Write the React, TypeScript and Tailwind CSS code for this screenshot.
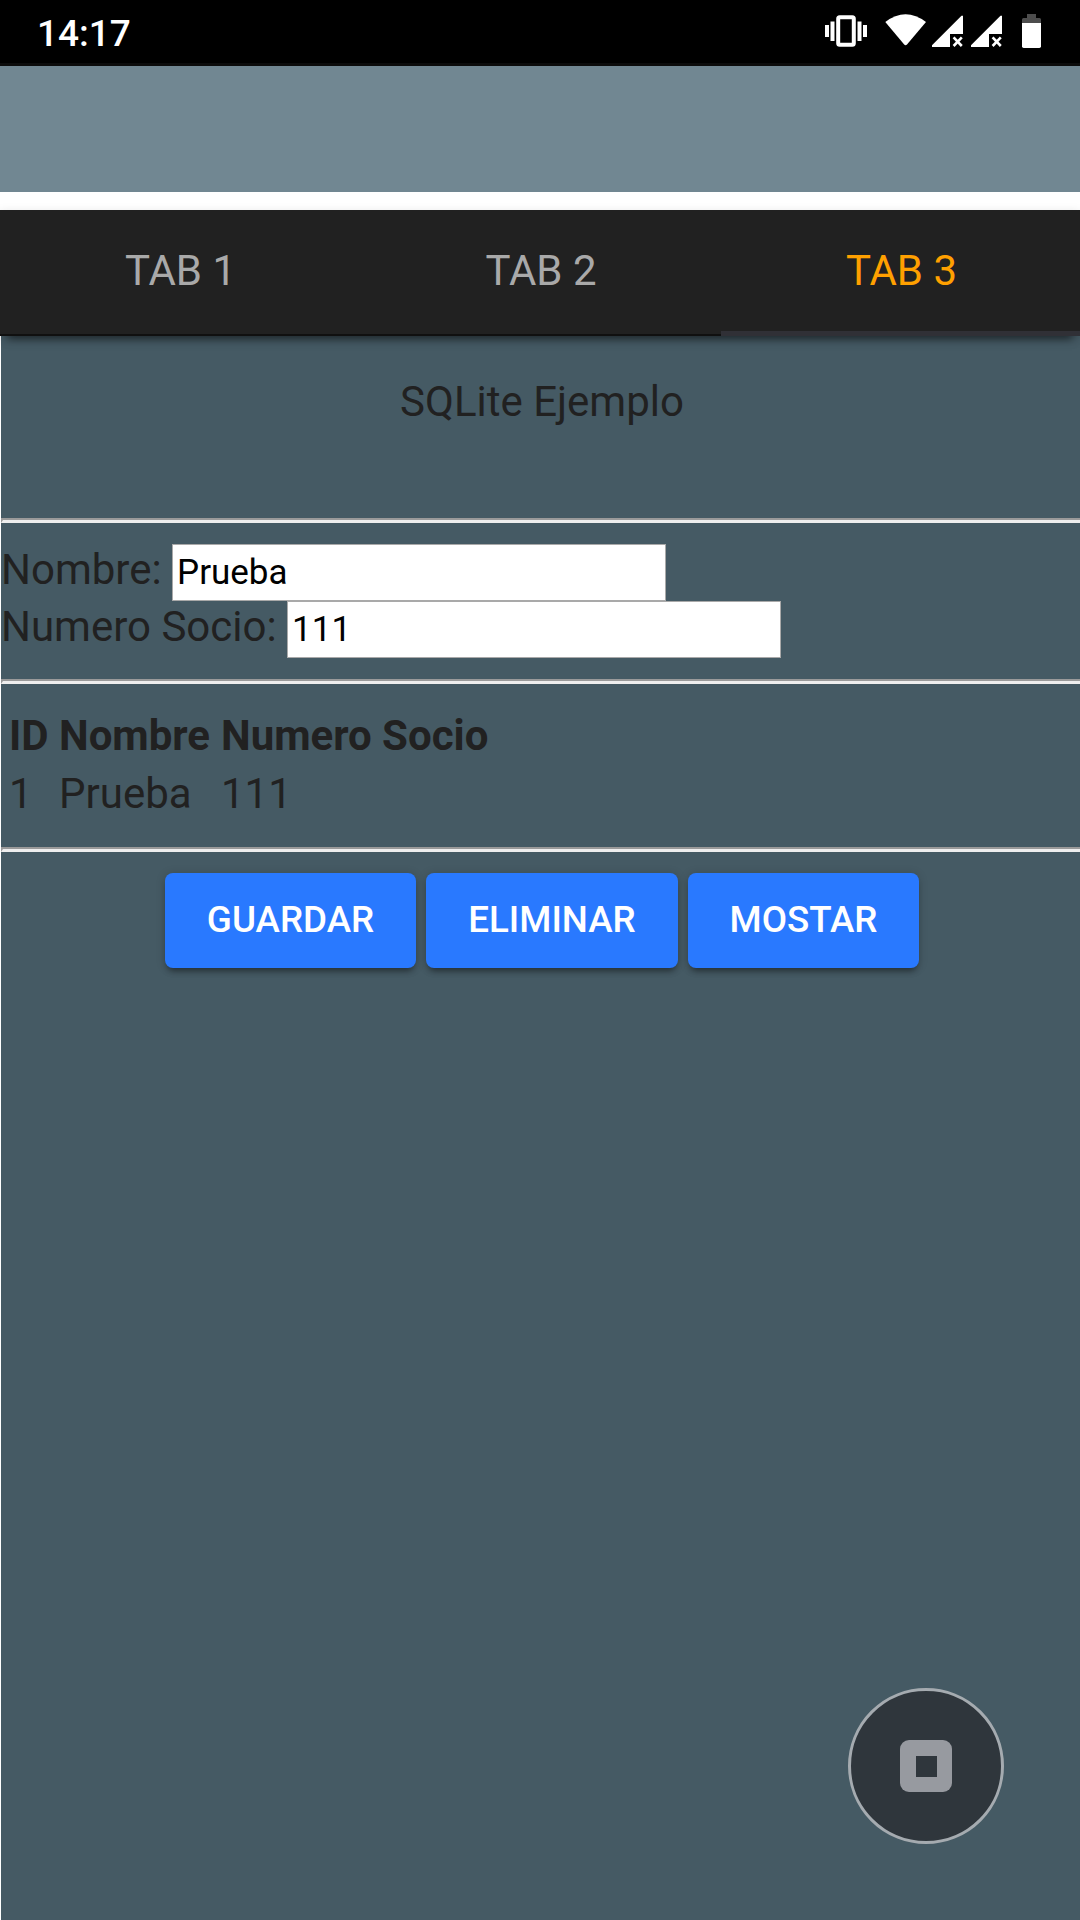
import React from 'react';

function StatusIcons() {
  return (
    <svg className="block" width="280" height="63" viewBox="0 0 280 63" fill="#fff">
      <rect x="25" y="25" width="4" height="12" />
      <rect x="30.5" y="21.5" width="4" height="19.5" />
      <rect x="38.2" y="17.2" width="15.6" height="27.6" rx="1.5" fill="none" stroke="#fff" strokeWidth="4" />
      <rect x="57.5" y="21.5" width="4" height="19.5" />
      <rect x="63" y="25" width="4" height="12" />
      <path d="M85.3 22 Q105.5 6.5 126 22 L107 44.6 Q105.6 46 104.2 44.6 Z" />
      <path d="M163 15.7 V34 H150 V47 H132 V45.2 L161.5 15.7 Z" />
      <path d="M153.6 37.4 L161.8 46 M161.8 37.4 L153.6 46" stroke="#fff" strokeWidth="2.6" />
      <path d="M202 15.7 V34 H189 V47 H171 V45.2 L200.5 15.7 Z" />
      <path d="M192.6 37.4 L200.8 46 M200.8 37.4 L192.6 46" stroke="#fff" strokeWidth="2.6" />
      <path d="M227 14 H236 V18 H239.5 Q241 18 241 19.5 V23 H222 V19.5 Q222 18 223.5 18 H227 Z" fill="#4d4d4d" />
      <path d="M222 23 H241 V46.3 Q241 48 239.3 48 H223.7 Q222 48 222 46.3 Z" />
    </svg>
  );
}

function Rule() {
  return <div className="h-[5px] shrink-0 border-t-2 border-b-[3px] border-l-2 border-t-[#9a9a9a] border-b-[#eeeeee] border-l-[#9a9a9a]" />;
}

function Field({ label, value }: { label: string; value: string }) {
  return (
    <label className="flex h-[57px] items-start">
      <span className="pt-px leading-[50px] whitespace-pre">{label} </span>
      <input
        className="h-[57px] w-[494px] border border-[#a9a9a9] bg-white px-1 text-[35px] text-black outline-none"
        defaultValue={value}
      />
    </label>
  );
}

const tabs = ['TAB 1', 'TAB 2', 'TAB 3'];
const actions = [
  { label: 'GUARDAR', width: 'w-[251px]' },
  { label: 'ELIMINAR', width: 'w-[252px]' },
  { label: 'MOSTAR', width: 'w-[231px]' },
];

export default function App() {
  return (
    <div className="relative flex h-[1920px] w-[1080px] flex-col overflow-hidden bg-white font-[Roboto,sans-serif] text-[42px] text-[#212121]">
      <header className="flex h-[66px] shrink-0 justify-between border-b-[3px] border-[#0c0c0c] bg-black">
        <span className="pt-3 pl-[37px] text-[37px] leading-[44px] font-medium text-white">14:17</span>
        <StatusIcons />
      </header>
      <div className="h-[126px] shrink-0 bg-[#718792]" />
      <nav className="z-10 mt-[18px] grid h-[126px] shrink-0 grid-cols-[360px_361px_359px] bg-[#212121] shadow-[0_11px_8px_-8px_rgba(0,0,0,0.5),0_3px_10px_rgba(0,0,0,0.15)]">
        {tabs.map((tab, i) => (
          <button
            key={tab}
            className={
              i === 2
                ? 'border-b-[5px] border-[#303036] pl-0.5 text-[#ffa000]'
                : 'border-b-2 border-[#101010] pb-1 pl-px text-[#a9a9a9]'
            }
          >
            {tab}
          </button>
        ))}
      </nav>
      <main className="flex grow flex-col border-l border-white bg-[#455a64]">
        <h1 className="mt-[41px] h-[141px] pl-[3px] text-center leading-[50px]">SQLite Ejemplo</h1>
        <Rule />
        <form className="mt-[21px] mb-[21px]">
          <Field label="Nombre:" value="Prueba" />
          <Field label="Numero Socio:" value="111" />
        </form>
        <Rule />
        <table className="mt-[27px] mb-[28px] ml-2 w-[490px] table-fixed text-left">
          <colgroup>
            <col className="w-[50px]" />
            <col className="w-[162px]" />
            <col />
          </colgroup>
          <thead>
            <tr className="h-[58px] align-top leading-[50px]">
              <th className="p-0 font-bold">ID</th>
              <th className="p-0 font-bold">Nombre</th>
              <th className="p-0 font-bold">Numero Socio</th>
            </tr>
          </thead>
          <tbody>
            <tr className="h-[50px] leading-[50px]">
              <td className="p-0">1</td>
              <td className="p-0">Prueba</td>
              <td className="p-0">111</td>
            </tr>
          </tbody>
        </table>
        <Rule />
        <div className="mt-[21px] flex justify-center gap-2.5 pl-[3px]">
          {actions.map(({ label, width }) => (
            <button
              key={label}
              className={`${width} h-[95px] rounded-lg bg-[#2979ff] pb-0.5 text-[36.75px] font-medium text-white shadow-[0_6px_6px_-3px_rgba(0,0,0,0.4),0_1px_10px_rgba(0,0,0,0.18)]`}
            >
              {label}
            </button>
          ))}
        </div>
      </main>
      <button className="absolute top-[1688px] left-[848px] flex size-[156px] items-center justify-center rounded-full border-[3px] border-[#a5abb0] bg-[#2f363c]">
        <span className="flex size-[52px] items-center justify-center rounded-[9px] bg-[#979aa0]">
          <span className="size-[21px] bg-[#2f363c]" />
        </span>
      </button>
    </div>
  );
}
